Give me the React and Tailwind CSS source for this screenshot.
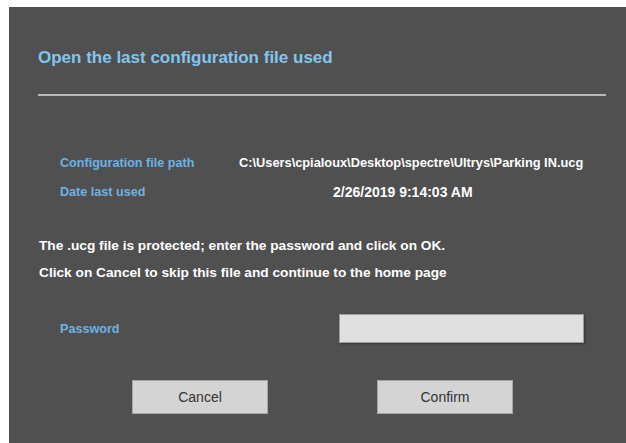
export default function App() {
  const font = { fontFamily: '"Liberation Sans", Arial, sans-serif' };
  return (
    <div className="w-[626px] h-[443px] bg-white pl-[9px] pt-[7px]" style={font}>
      <div className="h-full bg-[#505050] flex flex-col">
        {/* header */}
        <div className="pl-[29px] pt-[41px] h-[87px]">
          <h1 className="text-[17px] leading-[20px] font-bold text-[#80c6ee]">
            Open the last configuration file used
          </h1>
        </div>
        <div className="ml-[29px] mr-[20px] h-[2px] bg-[#b9b9b9]" />

        {/* file details */}
        <div className="mt-[59px] pl-[51px] flex flex-col gap-[13px] leading-[16px] font-bold">
          <div className="flex">
            <span className="w-[179px] text-[12.6px] text-[#6cb2e4]">Configuration file path</span>
            <span className="w-[346px] text-[12.8px] text-white">C:\Users\cpialoux\Desktop\spectre\Ultrys\Parking IN.ucg</span>
          </div>
          <div className="flex">
            <span className="w-[179px] text-[12.6px] text-[#6cb2e4]">Date last used</span>
            <span className="pl-[94px] text-[14px] text-white">2/26/2019 9:14:03 AM</span>
          </div>
        </div>

        {/* notice */}
        <div className="mt-[38px] pl-[30px] flex flex-col gap-[11px] text-[13.7px] leading-[16px] font-bold text-white">
          <p>The .ucg file is protected; enter the password and click on OK.</p>
          <p>Click on Cancel to skip this file and continue to the home page</p>
        </div>

        {/* password */}
        <div className="mt-[33px] pl-[51px] flex items-center">
          <span className="w-[279px] text-[12.6px] leading-[16px] font-bold text-[#6cb2e4]">Password</span>
          <input
            type="password"
            className="w-[245px] h-[29px] bg-[#e0e0e0] border border-[#9c9c9c] shadow-[1px_1px_2px_rgba(0,0,0,0.35)] outline-none"
          />
        </div>

        {/* actions */}
        <div className="mt-[37px] pl-[123px] flex">
          <button className="w-[136px] h-[34px] bg-[#d4d4d4] border border-[#a6a6a6] text-[14px] text-[#333333]">
            Cancel
          </button>
          <button className="ml-[109px] w-[136px] h-[34px] bg-[#d4d4d4] border border-[#a6a6a6] text-[14px] text-[#333333]">
            Confirm
          </button>
        </div>
      </div>
    </div>
  );
}
